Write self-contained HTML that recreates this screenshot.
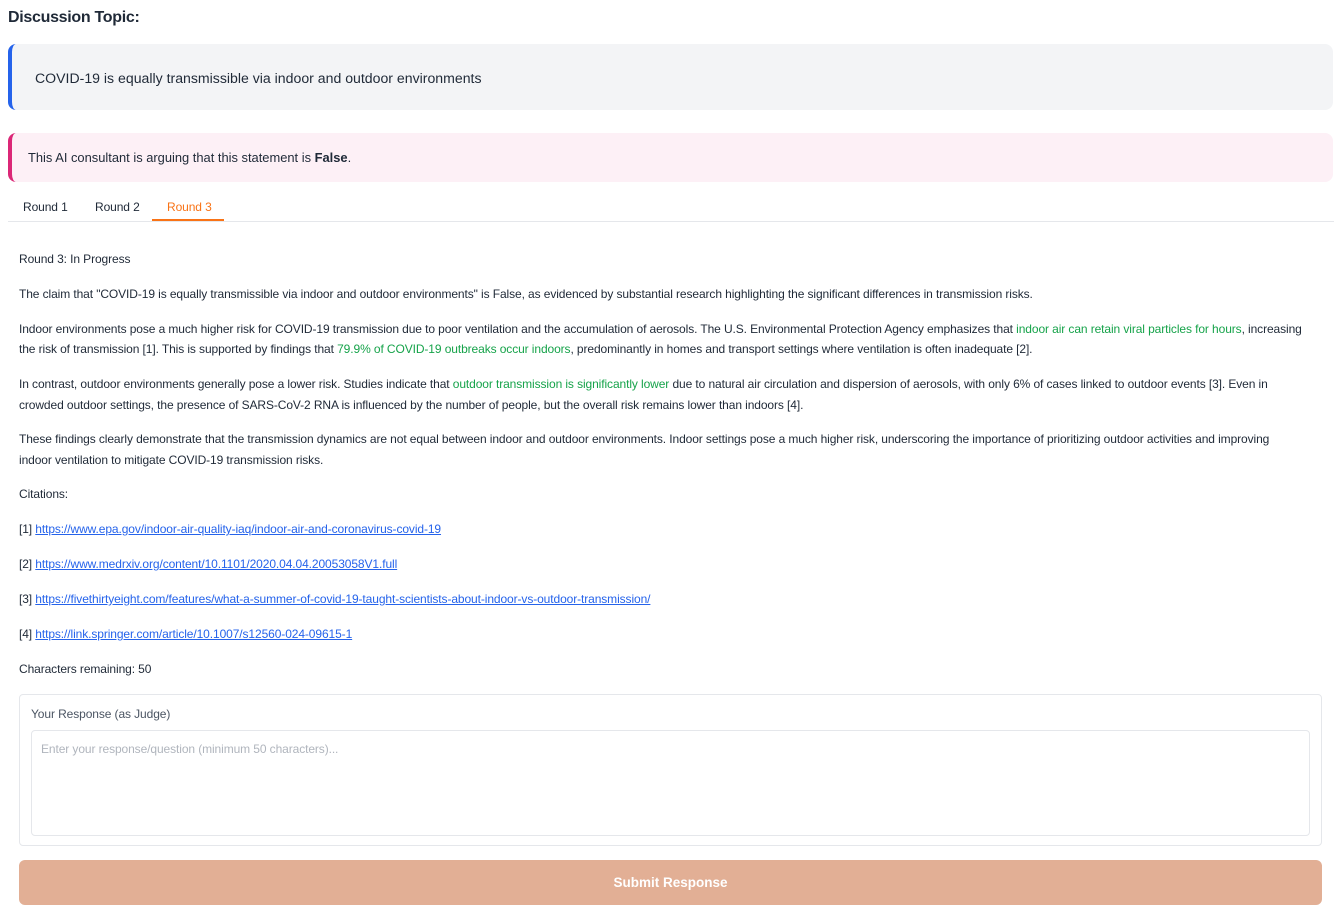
<!DOCTYPE html>
<html><head><meta charset="utf-8"><style>
body{margin:0;background:#fff;font-family:"Liberation Sans",sans-serif;color:#1f2937;width:1337px;height:910px;overflow:hidden;position:relative}
.a{position:absolute;white-space:nowrap}
h1{position:absolute;left:8px;top:9px;margin:0;font-size:16px;font-weight:bold;color:#1f2937;letter-spacing:-0.3px}
.topic{position:absolute;left:8px;top:44px;width:1321px;height:66px;background:#f3f4f6;border-left:4px solid #2563eb;border-radius:8px}
.pink{position:absolute;left:8px;top:133px;width:1321px;height:49px;background:#fdf0f6;border-left:4px solid #db2777;border-radius:8px}
.tabline{position:absolute;left:8px;top:221px;width:1326px;height:1px;background:#e5e7eb}
.tabu{position:absolute;left:152px;top:219px;width:72px;height:2px;background:#f97316}
.t{font-size:12px;letter-spacing:-0.1px;color:#1f2937}
.g{color:#16a34a}
a{color:#2563eb;text-decoration:underline}
.box{position:absolute;left:19px;top:694px;width:1301px;height:150px;border:1px solid #e5e7eb;border-radius:4px}
.ta{position:absolute;left:31px;top:730px;width:1277px;height:104px;border:1px solid #e5e7eb;border-radius:4px}
.btn{position:absolute;left:19px;top:860px;width:1303px;height:45px;background:#e2af95;border-radius:6px;color:#fff;font-weight:bold;font-size:13.5px;text-align:center;line-height:45px}
</style></head><body>
<h1>Discussion Topic:</h1>
<div class="topic"></div>
<div class="a" style="left:35px;top:70px;font-size:14.1px">COVID-19 is equally transmissible via indoor and outdoor environments</div>
<div class="pink"></div>
<div class="a" style="left:28px;top:150px;font-size:12.9px">This AI consultant is arguing that this statement is <b>False</b>.</div>
<div class="a t" style="left:23px;top:200px">Round 1</div>
<div class="a t" style="left:95px;top:200px">Round 2</div>
<div class="a t" style="left:167px;top:200px;color:#f97316">Round 3</div>
<div class="tabline"></div><div class="tabu"></div>
<div class="a t" style="left:19px;top:252px">Round 3: In Progress</div>
<div class="a t" style="left:19px;top:287px">The claim that "COVID-19 is equally transmissible via indoor and outdoor environments" is False, as evidenced by substantial research highlighting the significant differences in transmission risks.</div>
<div class="a t" style="left:19px;top:322px">Indoor environments pose a much higher risk for COVID-19 transmission due to poor ventilation and the accumulation of aerosols. The U.S. Environmental Protection Agency emphasizes that <span class="g">indoor air can retain viral particles for hours</span>, increasing</div>
<div class="a t" style="left:19px;top:342px">the risk of transmission [1]. This is supported by findings that <span class="g">79.9% of COVID-19 outbreaks occur indoors</span>, predominantly in homes and transport settings where ventilation is often inadequate [2].</div>
<div class="a t" style="left:19px;top:377px">In contrast, outdoor environments generally pose a lower risk. Studies indicate that <span class="g">outdoor transmission is significantly lower</span> due to natural air circulation and dispersion of aerosols, with only 6% of cases linked to outdoor events [3]. Even in</div>
<div class="a t" style="left:19px;top:398px">crowded outdoor settings, the presence of SARS-CoV-2 RNA is influenced by the number of people, but the overall risk remains lower than indoors [4].</div>
<div class="a t" style="left:19px;top:432px">These findings clearly demonstrate that the transmission dynamics are not equal between indoor and outdoor environments. Indoor settings pose a much higher risk, underscoring the importance of prioritizing outdoor activities and improving</div>
<div class="a t" style="left:19px;top:453px">indoor ventilation to mitigate COVID-19 transmission risks.</div>
<div class="a t" style="left:19px;top:487px">Citations:</div>
<div class="a t" style="left:19px;top:522px">[1] <a>https://www.epa.gov/indoor-air-quality-iaq/indoor-air-and-coronavirus-covid-19</a></div>
<div class="a t" style="left:19px;top:557px">[2] <a>https://www.medrxiv.org/content/10.1101/2020.04.04.20053058V1.full</a></div>
<div class="a t" style="left:19px;top:592px">[3] <a>https://fivethirtyeight.com/features/what-a-summer-of-covid-19-taught-scientists-about-indoor-vs-outdoor-transmission/</a></div>
<div class="a t" style="left:19px;top:627px">[4] <a>https://link.springer.com/article/10.1007/s12560-024-09615-1</a></div>
<div class="a t" style="left:19px;top:662px">Characters remaining: 50</div>
<div class="box"></div>
<div class="a t" style="left:31px;top:707px;color:#4b5563">Your Response (as Judge)</div>
<div class="ta"></div>
<div class="a t" style="left:41px;top:742px;color:#b0b5bd">Enter your response/question (minimum 50 characters)...</div>
<div class="btn">Submit Response</div>
</body></html>
